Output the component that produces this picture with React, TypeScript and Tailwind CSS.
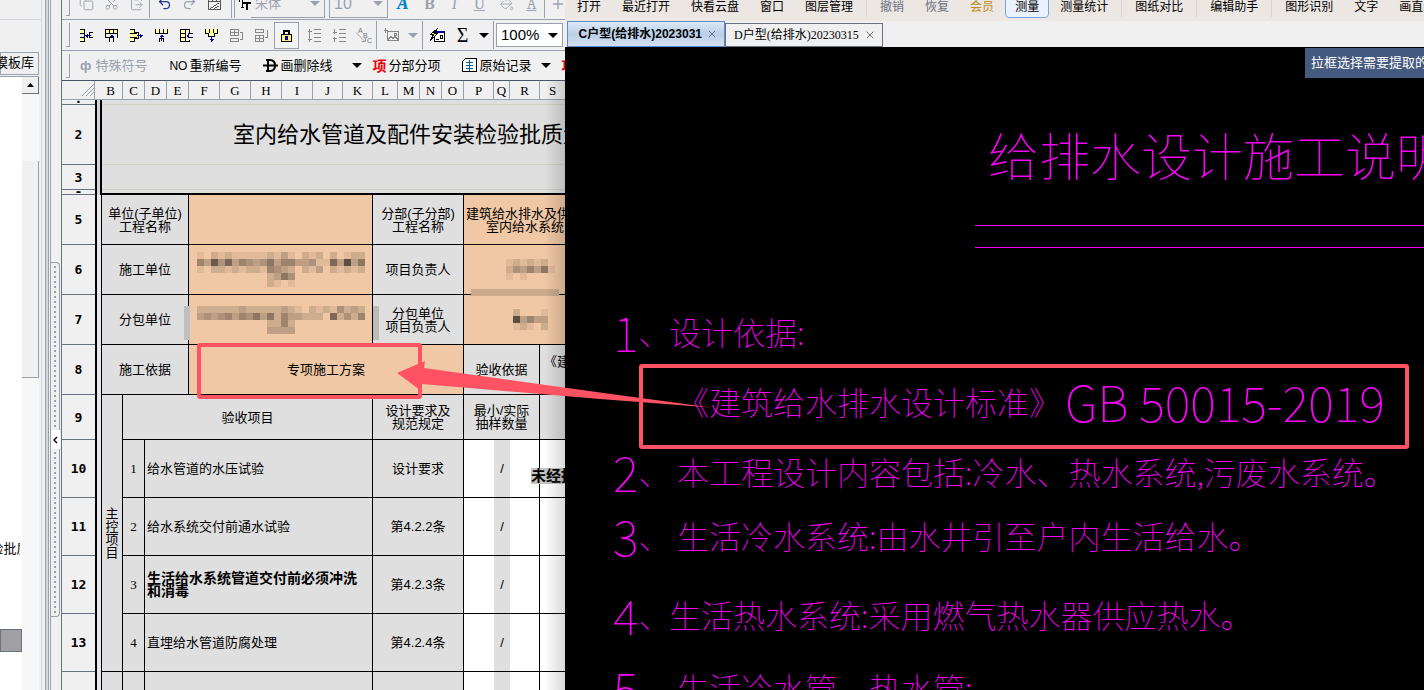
import React from 'react';
import { Copy, Scissors, ClipboardPaste, Undo2, Redo2, PaintBucket, Plus, X } from 'lucide-react';

const columns: { name: string; width: number }[] = [
  { name: 'B', width: 21 },
  { name: 'C', width: 22 },
  { name: 'D', width: 22 },
  { name: 'E', width: 22 },
  { name: 'F', width: 31 },
  { name: 'G', width: 31 },
  { name: 'H', width: 31 },
  { name: 'I', width: 31 },
  { name: 'J', width: 30 },
  { name: 'K', width: 30 },
  { name: 'L', width: 25 },
  { name: 'M', width: 22 },
  { name: 'N', width: 22 },
  { name: 'O', width: 22 },
  { name: 'P', width: 30 },
  { name: 'Q', width: 16 },
  { name: 'R', width: 30 },
  { name: 'S', width: 26 },
];

const checkItems = [
  { row: 10, no: 1, name: '给水管道的水压试验', rule: '设计要求' },
  { row: 11, no: 2, name: '给水系统交付前通水试验', rule: '第4.2.2条' },
  { row: 12, no: 3, name: '生活给水系统管道交付前必须冲洗和消毒', rule: '第4.2.3条', bold: true },
  { row: 13, no: 4, name: '直埋给水管道防腐处理', rule: '第4.2.4条' },
];

// Each digit is the darkness of one block
const companyMosaic = [
  '102121111121310212020122',
  '538473543463553341173936',
  '102212122154320213021212',
  '000000000023640000000000',
  '000000000021010000000000',
];
const subcontractorMosaic = [
  '222222322222321021214232',
  '343453546362533222072425',
  '000000000022520000000000',
  '000000000033330000000000',
];
const managerMosaic = ['1212120', '2435361', '1010000'];
const subManagerMosaic = ['0200010', '0935330', '0121020'];

const Mosaic: React.FC<{ rows: string[] }> = ({ rows }) => (
  <svg width={rows[0].length * 7} height={rows.length * 7} shapeRendering="crispEdges" aria-hidden="true">
    {rows.map((row, y) =>
      row.split('').map((d, x) => (
        <rect key={`${x}-${y}`} x={x * 7} y={y * 7} width="7" height="7" fill="#2b2320" opacity={Number(d) / 12} />
      ))
    )}
  </svg>
);

const Caret: React.FC<{ className?: string }> = ({ className = 'fill-black' }) => (
  <svg width="10" height="5" viewBox="0 0 10 5" className={`shrink-0 ${className}`} aria-hidden="true">
    <path d="M0 0h10L5 5z" />
  </svg>
);

const Grip = () => <div className="mr-1 h-6 w-1 shrink-0 border-b border-r border-gray-400" />;
const Divider = () => <div className="h-7 w-px shrink-0 bg-gray-400" />;

const ToolButton: React.FC<{ label: string; className?: string; children: React.ReactNode }> = ({
  label,
  className = '',
  children,
}) => (
  <button aria-label={label} className={`flex h-6 w-[25px] shrink-0 items-center justify-center ${className}`}>
    {children}
  </button>
);

const Glyph: React.FC<{ children: React.ReactNode; className?: string }> = ({ children, className = '' }) => (
  <svg
    width="15"
    height="15"
    viewBox="0 0 15 15"
    fill="none"
    stroke="black"
    shapeRendering="crispEdges"
    className={className}
    aria-hidden="true"
  >
    {children}
  </svg>
);

const ComboBox: React.FC<{ label: string; value: string; className: string; caret?: string }> = ({
  label,
  value,
  className,
  caret,
}) => (
  <div className={`relative flex shrink-0 items-center border border-gray-400 ${className}`}>
    <select aria-label={label} className="h-full w-full appearance-none bg-transparent px-1 outline-none">
      <option>{value}</option>
    </select>
    <span className="pointer-events-none absolute right-1">
      <Caret className={caret} />
    </span>
  </div>
);

const TemplatePanel = () => (
  <aside className="flex w-[62px] shrink-0 bg-[#f0f0f0]">
    <div className="flex w-[42px] flex-col overflow-hidden border-r border-gray-300">
      <div className="h-5 shrink-0 border-b border-gray-300" />
      <button className="mt-8 flex h-[23px] w-[39px] shrink-0 justify-end border border-gray-400 pr-1 text-[13px] leading-5">
        <span className="whitespace-nowrap">模板库</span>
      </button>
      <div className="mt-px flex w-[39px] flex-1 border-t border-gray-400">
        <div className="w-[22px] bg-white">
          <div className="mt-[464px] flex h-4 w-5 justify-center overflow-hidden text-[13px] leading-4">
            <span className="whitespace-nowrap">检批质</span>
          </div>
          <div className="mt-[72px] h-[23px] border border-gray-500 bg-[#a09fa4]" />
        </div>
        <div className="w-[17px] bg-[#f7f7f7]">
          <button
            aria-label="向上"
            className="flex h-[17px] w-full items-center justify-center border-b border-r border-gray-500 bg-[#f0f0f0]"
          >
            <svg width="7" height="4" aria-hidden="true">
              <path d="M0 4h7L3.5 0z" />
            </svg>
          </button>
          <div className="mt-[67px] h-[217px] border-b border-r border-gray-400 bg-[#f0f0f0]" />
        </div>
      </div>
    </div>
    <div className="flex flex-1 justify-between pl-[3px]">
      <div className="w-1 border-x border-gray-400 bg-gray-300" />
      <div className="flex w-[10px] flex-col border-l border-gray-400 pt-[262px]">
        <SplitterDots className="h-[168px] rounded-tr border-t" />
        <button aria-label="折叠" className="flex h-[19px] w-[9px] items-center justify-center bg-white">
          <svg width="5" height="8" fill="none" stroke="black" strokeWidth="1.5" aria-hidden="true">
            <path d="M4 1L1 4l3 3" />
          </svg>
        </button>
        <SplitterDots className="h-[168px] rounded-br border-b" />
      </div>
      <div className="w-px bg-gray-500" />
    </div>
  </aside>
);

const SplitterDots: React.FC<{ className: string }> = ({ className }) => (
  <div
    className={`flex w-[9px] flex-col items-center justify-evenly overflow-hidden border-r border-gray-400 ${className}`}
  >
    {Array.from({ length: 33 }, (_, i) => (
      <i key={i} className="h-0.5 w-0.5 shrink-0 bg-gray-400" />
    ))}
  </div>
);

const Toolbars = () => (
  <div className="h-[81px] shrink-0 overflow-hidden border-b border-gray-600">
    <div className="-mt-3 flex h-8 items-center border-b border-gray-400 pl-1 text-gray-400">
      <Grip />
      <ToolButton label="复制"><Copy size={15} strokeWidth={1.5} /></ToolButton>
      <ToolButton label="剪切"><Scissors size={15} strokeWidth={1.5} className="-rotate-90" /></ToolButton>
      <ToolButton label="粘贴"><ClipboardPaste size={15} strokeWidth={1.5} /></ToolButton>
      <Divider />
      <ToolButton label="撤消" className="ml-0.5"><Undo2 size={15} className="text-blue-900" /></ToolButton>
      <ToolButton label="重做"><Redo2 size={15} /></ToolButton>
      <ToolButton label="清除">
        <Glyph>
          <path stroke="#555" d="M1.5 1.5h12v12h-12zM1.5 5.5h12M5.5 1.5v4M9.5 1.5v4M3.5 12.5l9-6M7.5 12.5l5-3" />
        </Glyph>
      </ToolButton>
      <div className="ml-1"><Divider /></div>
      <div className="ml-0.5 flex h-7 shrink-0 items-center border-l border-gray-400 pl-1">
        <svg width="12" height="12" stroke="black" fill="none" shapeRendering="crispEdges" aria-hidden="true">
          <path d="M0 1.500h8M0.500 1v3M3.500 1v8M2 9.500h3" />
          <path strokeWidth="2" d="M4 5h8M8 5v7" />
        </svg>
        <ComboBox label="字体" value="宋体" className="h-7 w-[74px] border-l-0 text-[13px]" caret="fill-gray-400" />
      </div>
      <ComboBox label="字号" value="10" className="ml-1 h-7 w-[59px] text-base" caret="fill-gray-400" />
      <ToolButton label="文字效果" className="ml-0.5"><span className="font-serif text-lg font-bold italic text-sky-600">A</span></ToolButton>
      <ToolButton label="加粗" className="ml-0.5"><b className="font-serif text-base">B</b></ToolButton>
      <ToolButton label="倾斜"><i className="font-serif text-base">I</i></ToolButton>
      <ToolButton label="下划线"><u className="font-serif text-base">U</u></ToolButton>
      <ToolButton label="填充颜色" className="ml-0.5"><PaintBucket size={14} strokeWidth={1.5} /></ToolButton>
      <ToolButton label="文字颜色"><u className="font-serif text-base">A</u></ToolButton>
      <Divider />
      <ToolButton label="边框"><Plus size={16} /></ToolButton>
    </div>

    <div className="flex h-[31px] items-center border-b border-gray-400 pl-1">
      <Grip />
      <ToolButton label="插入单元格">
        <Glyph>
          <path fill="#ffffa0" d="M1 1.5h4.500v4h-4.500M1 9.500h4.500v4h-4.500" />
          <path d="M5.500 5.500v4M14 4.500h-3.500v5h3.500" />
          <path stroke="#00008b" d="M12 7.500h-6M8.500 5.500v4M7.500 6.500v2" />
        </Glyph>
      </ToolButton>
      <ToolButton label="插入行">
        <Glyph>
          <path fill="#ffffa0" d="M1.500 1.500h12v4h-12zM5.500 1.500v4M9.500 1.500v4M1.500 5.500v4h3" />
          <path d="M13.500 5.500v4M5.500 14v-4.500h4v4.500" />
          <path stroke="#00008b" d="M5.500 8.500h4M6.500 7.500h2" />
        </Glyph>
      </ToolButton>
      <ToolButton label="右移单元格">
        <Glyph>
          <path fill="#ffffa0" d="M1 1.500h4.500v3h4v6h-4v3h-4.500M1 5.500h7M1 9.500h7" />
          <path stroke="#00008b" d="M8 7.500h6M11.500 5.500v4M12.500 6.500v2" />
        </Glyph>
      </ToolButton>
      <ToolButton label="删除行">
        <Glyph>
          <path fill="#ffffa0" d="M1.500 1v4.500h4v-4.500M9.500 1v4.500h4v-4.500" />
          <path d="M5.500 5.500h4M5.500 14v-4h4v4" />
          <path stroke="#00008b" d="M7.500 13v-6M5.500 8.500h4M6.500 7.500h2" />
        </Glyph>
      </ToolButton>
      <ToolButton label="插入列">
        <Glyph>
          <path fill="#ffffa0" d="M1.500 1.500h5v12h-5zM1.500 5.500h5M1.500 9.500h5M6.500 1.500h4v3M6.500 13.500h4v-2" />
          <path d="M14 5.500h-4.500v4h4.500" />
          <path stroke="#00008b" d="M8.500 6.500v2M9.500 5.500v4" />
        </Glyph>
      </ToolButton>
      <ToolButton label="下移单元格">
        <Glyph>
          <path fill="#ffffa0" d="M1.500 1v4.500h3v3h6v-3h3v-4.500M5.500 1v4M9.500 1v4" />
          <path stroke="#00008b" d="M7.500 8v6M5.500 11.500h4M6.500 12.500h2" />
        </Glyph>
      </ToolButton>
      <ToolButton label="删除单元格">
        <Glyph>
          <path stroke="#888" d="M1.500 1.500h8v6h-8zM1.500 4.500h8M5.500 1.500v6M1.500 10.500h8v3h-8zM11 4.500h2.500v7h-2.500" />
        </Glyph>
      </ToolButton>
      <ToolButton label="合并单元格">
        <Glyph>
          <path stroke="#888" d="M1.500 1.500h8v3h-8zM1.500 7.500h8v6h-8zM1.500 10.500h8M5.500 7.500v6M13.500 2v7.500h-3" />
        </Glyph>
      </ToolButton>
      <ToolButton label="锁定" className="h-[27px] border border-gray-400 bg-gray-100">
        <Glyph>
          <path strokeWidth="2" d="M5 6v-3h5v3" />
          <path fill="#ffee80" d="M2.500 6.500h10v7h-10z" />
          <path fill="#00008b" stroke="none" d="M6 8h3v4h-3z" />
        </Glyph>
      </ToolButton>
      <ToolButton label="增大行距" className="ml-0.5">
        <Glyph><path stroke="#888" d="M3.500 1v13M1.500 3.500h4M1.500 11.500h4M7.500 1.500h7M7.500 5.500h7M7.500 9.500h7M7.500 13.500h7" /></Glyph>
      </ToolButton>
      <ToolButton label="减小行距">
        <Glyph><path stroke="#888" d="M3.500 1v5M1.500 4.500h4M3.500 14v-5M1.500 10.500h4M7.500 1.500h7M7.500 5.500h7M7.500 9.500h7M7.500 13.500h7" /></Glyph>
      </ToolButton>
      <ToolButton label="文字方向">
        <svg width="17" height="17" className="fill-gray-500 stroke-gray-400" aria-hidden="true">
          <text x="3" y="6" fontSize="7" strokeWidth="0">A</text>
          <text x="8" y="11" fontSize="7" strokeWidth="0">B</text>
          <text x="12" y="16" fontSize="7" strokeWidth="0">C</text>
          <path fill="none" d="M1 5.500l9 9M6.500 14.500h4v-4" />
        </svg>
      </ToolButton>
      <Divider />
      <ToolButton label="插入图片" className="ml-0.5">
        <Glyph><path stroke="#888" d="M1.500 0v5M0 2.500h4M3.500 3.500h11v9h-11zM4 11.500l3-3 2 2 2-2 3 3M10.500 5.500h2v2h-2z" /></Glyph>
      </ToolButton>
      <Caret className="mr-1 ml-1 fill-gray-400" />
      <Divider />
      <ToolButton label="函数" className="ml-0.5">
        <Glyph>
          <path fill="white" d="M4.500 3.500h10v10h-10z" />
          <path stroke="#00008b" strokeWidth="2" d="M4 4h11" />
          <path d="M10.500 7.500h2v3h-2zM6 11.500h3" />
          <path fill="#fff25c" d="M7.500 0.500l-7 6h3l-3 6 7-7h-3z" />
        </Glyph>
      </ToolButton>
      <ToolButton label="求和"><span className="font-['Liberation_Serif',serif] text-xl">Σ</span></ToolButton>
      <Caret className="mr-1 ml-1 fill-black" />
      <Divider />
      <ComboBox label="缩放比例" value="100%" className="ml-0.5 h-6 w-[67px] bg-white text-[15px]" />
    </div>

    <div className="flex h-[29px] items-center whitespace-nowrap pl-1 text-[13px]">
      <Grip />
      <button disabled className="ml-1.5 flex shrink-0 items-center gap-1 text-gray-400">
        <span className="font-bold">ф</span>特殊符号
      </button>
      <button className="ml-[22px] flex shrink-0 items-center gap-0.5">
        <span className="text-xs">NO</span>重新编号
      </button>
      <button className="ml-[22px] flex shrink-0 items-center gap-0.5">
        <svg width="15" height="13" fill="none" stroke="black" strokeWidth="2" aria-hidden="true">
          <path d="M5 1v11M3 1h4q5 0 5 5.500t-5 5.500H3M0 6.500h15" />
        </svg>
        画删除线
      </button>
      <button aria-label="画删除线选项" className="ml-5 shrink-0"><Caret /></button>
      <button className="ml-2.5 flex shrink-0 items-center gap-0.5">
        <b className="text-sm text-red-600">项</b>分部分项
      </button>
      <button className="ml-[22px] flex shrink-0 items-center gap-0.5">
        <Glyph>
          <path fill="white" d="M3.500 0.500h11v13h-14v-10z" />
          <path stroke="#075ba0" d="M4 4.500h7M4 7.500h7M4 10.500h7M7.500 2v11" />
        </Glyph>
        原始记录
      </button>
      <button aria-label="原始记录选项" className="ml-2.5 shrink-0"><Caret /></button>
      <b className="ml-2.5 text-sm text-red-600">项</b>
    </div>
  </div>
);

const label = 'border-b border-r border-black bg-[#dfdfdf]';
const input = 'border-b border-r border-black bg-[#f0c8a5]';
const blank = 'border-b border-r border-black bg-white';

// Row number on the left plus the frozen pane bar
const RowHead: React.FC<{ n: string | number; frozen?: boolean }> = ({ n, frozen }) => (
  <>
    <th className="overflow-hidden border-b border-gray-500 bg-[#f0f0f0] font-['DejaVu_Sans_Mono',monospace] font-bold">
      {n}
    </th>
    <td className={frozen ? 'border-x-2 border-black bg-gray-300' : 'border-l-2 border-r border-black bg-gray-200'} />
  </>
);

const Sheet = () => (
  <div className="relative flex-1 overflow-hidden bg-[#f0f0f0]">
    <table className="w-[504px] table-fixed border-separate border-spacing-0 text-center text-[13px] leading-[13px]">
      <colgroup>
        <col style={{ width: 33 }} />
        <col style={{ width: 7 }} />
        {columns.map(c => (
          <col key={c.name} style={{ width: c.width }} />
        ))}
      </colgroup>
      <thead>
        <tr className="h-[19px] font-['Liberation_Serif',serif]">
          <th aria-label="全选" className="border-b border-r border-gray-400">
            <svg width="12" height="12" className="ml-auto stroke-gray-400" aria-hidden="true">
              <path d="M0 12L12 0M4 12l8-8M8 12l4-4" />
            </svg>
          </th>
          {columns.map((c, i) => (
            <th
              key={c.name}
              colSpan={i === 0 ? 2 : 1}
              className={`border-b border-r border-gray-400 font-normal ${i === 0 ? 'pl-1' : ''}`}
            >
              {c.name}
            </th>
          ))}
        </tr>
      </thead>
      <tbody>
        <tr className="h-[5px] leading-[4px]">
          <RowHead n="·" frozen />
          <td colSpan={18} className="border-b border-[#d0cfc5] bg-[#dfdfdf]" />
        </tr>
        <tr className="h-[60px]">
          <RowHead n={2} frozen />
          <td colSpan={18} className="border-b border-[#d0cfc5] bg-[#dfdfdf] pl-[131px] text-left text-[22px] leading-6">
            <div className="overflow-hidden whitespace-nowrap">室内给水管道及配件安装检验批质量</div>
          </td>
        </tr>
        <tr className="h-[25px]">
          <RowHead n={3} frozen />
          <td colSpan={18} className="border-b border-[#d0cfc5] bg-[#dfdfdf]" />
        </tr>
        <tr className="h-[5px] leading-[4px]">
          <RowHead n="-" frozen />
          <td colSpan={18} className="border-b-2 border-black bg-[#dfdfdf]" />
        </tr>
        <tr className="h-[50px]">
          <RowHead n={5} />
          <td colSpan={4} className={label}>单位(子单位)<br />工程名称</td>
          <td colSpan={6} className={input} />
          <td colSpan={4} className={label}>分部(子分部)<br />工程名称</td>
          <td colSpan={4} className={`${input} overflow-hidden whitespace-nowrap pl-0.5 text-left`}>
            <div>建筑给水排水及供</div>
            <div className="pl-5">室内给水系统</div>
          </td>
        </tr>
        <tr className="h-[50px]">
          <RowHead n={6} />
          <td colSpan={4} className={label}>施工单位</td>
          <td colSpan={6} className={input}><div className="flex justify-center"><Mosaic rows={companyMosaic} /></div></td>
          <td colSpan={4} className={label}>项目负责人</td>
          <td colSpan={4} className={`${input} pl-[42px]`}><Mosaic rows={managerMosaic} /></td>
        </tr>
        <tr className="h-[50px]">
          <RowHead n={7} />
          <td colSpan={4} className={label}>分包单位</td>
          <td colSpan={6} className={input}><div className="flex justify-center"><Mosaic rows={subcontractorMosaic} /></div></td>
          <td colSpan={4} className={label}>分包单位<br />项目负责人</td>
          <td colSpan={4} className={`${input} pl-[42px]`}><Mosaic rows={subManagerMosaic} /></td>
        </tr>
        <tr className="h-[50px]">
          <RowHead n={8} />
          <td colSpan={4} className={label}>施工依据</td>
          <td colSpan={10} className={input}>专项施工方案</td>
          <td colSpan={3} className={label}>验收依据</td>
          <td className={`${label} overflow-hidden whitespace-nowrap pb-4 pl-1 text-left`}>《建</td>
        </tr>
        <tr className="h-[45px]">
          <RowHead n={9} />
          <td rowSpan={5} className={label}><span className="mx-auto block w-[13px]">主控项目</span></td>
          <td colSpan={9} className={label}>验收项目</td>
          <td colSpan={4} className={label}>设计要求及<br />规范规定</td>
          <td colSpan={3} className={label}>最小/实际<br />抽样数量</td>
          <td className={label} />
        </tr>
        {checkItems.map(item => (
          <tr key={item.row} className="h-[58px]">
            <RowHead n={item.row} />
            <td className={`${label} font-['Liberation_Serif',serif]`}>{item.no}</td>
            <td
              colSpan={8}
              className={`${label} pr-3 pl-0.5 text-left ${item.bold ? 'text-[14px] leading-[13px] font-bold' : ''}`}
            >
              {item.name}
            </td>
            <td colSpan={4} className={label}>{item.rule}</td>
            <td className="border-b border-black bg-white" />
            <td className="border-b border-black bg-[#dfdfdf]">/</td>
            <td className={blank} />
            <td className={blank} />
          </tr>
        ))}
        <tr className="h-[58px]">
          <RowHead n="" />
          <td className={label} />
          <td className={label} />
          <td colSpan={8} className={label} />
          <td colSpan={4} className={label} />
          <td className="bg-white" />
          <td className="bg-[#dfdfdf]" />
          <td className={blank} />
          <td className={blank} />
        </tr>
      </tbody>
    </table>
    <div className="absolute top-[387px] left-[469px] whitespace-nowrap bg-[#c4c4c4] text-[15px] leading-4 font-bold">未经批</div>
    <div className="absolute top-[225px] left-[122px] h-[34px] w-1.5 bg-[#bfbfbf]" />
    <div className="absolute top-[225px] left-[311px] h-[34px] w-1.5 bg-[#bfbab3]" />
    <div className="absolute top-[208px] left-[409px] h-[7px] w-[88px] bg-[#caaa8b]" />
    <div className="absolute inset-y-0 right-0 w-5 bg-linear-to-r from-transparent to-black/15" />
  </div>
);

const menuItems = [
  '打开', '最近打开', '快看云盘', '窗口', '图层管理', '|', '撤销', '恢复', '会员', '测量', '测量统计', '|',
  '图纸对比', '|', '编辑助手', '|', '图形识别', '文字', '画直线',
];

const menuStyle: Record<string, string> = {
  撤销: 'px-2.5 text-gray-500',
  恢复: 'px-2.5 text-gray-500',
  会员: 'px-2.5 text-[#c08a20]',
  测量: 'rounded border border-[#7da2e8] bg-[#eaf2fd] px-[9px]',
};

const notes = [
  { no: '1', text: '设计依据:', height: 'h-[70px]', noWidth: 'w-14' },
  { no: '', text: '《建筑给水排水设计标准》', code: 'GB 50015-2019', height: 'h-[70px]', noWidth: 'w-16' },
  { no: '2', text: '本工程设计内容包括:冷水、热水系统,污废水系统。', height: 'h-[70px]', noWidth: 'w-16' },
  { no: '3', text: '生活冷水系统:由水井引至户内生活给水。', height: 'h-[58px]', noWidth: 'w-16' },
  { no: '4', text: '生活热水系统:采用燃气热水器供应热水。', height: 'h-[100px]', noWidth: 'w-14' },
  { no: '5', text: '生活冷水管、热水管:', height: 'h-[46px]', noWidth: 'w-16' },
];

const CadViewer = () => (
  <main className="flex min-w-0 flex-[859] flex-col overflow-hidden bg-black">
    <nav className="-mt-[7px] flex h-7 shrink-0 items-center gap-px overflow-hidden bg-[#ece7e3] pl-0.5 text-xs">
      {menuItems.map((item, i) =>
        item === '|' ? (
          <div key={i} className="mx-0.5 h-5 w-px shrink-0 bg-gray-300" />
        ) : (
          <button key={item} className={`h-[22px] shrink-0 whitespace-nowrap ${menuStyle[item] ?? 'px-2.5'}`}>
            {item}
          </button>
        )
      )}
    </nav>
    <div className="flex h-[26px] shrink-0 items-end bg-[#f0f0f0] pl-0.5 text-xs whitespace-nowrap">
      <div className="flex h-[26px] w-[158px] items-center justify-end gap-1 overflow-hidden border border-[#5b8ac5] bg-linear-to-b from-[#dce9f7] via-[#b9cfe8] to-[#d3e1f1] pr-1.5">
        <button className="font-bold">C户型(给排水)2023031</button>
        <button aria-label="关闭"><X size={12} className="text-gray-500" /></button>
      </div>
      <div className="flex h-6 w-[158px] items-center justify-between border border-gray-500 pr-1.5 pl-2">
        <button className="font-['Liberation_Serif','Noto_Sans_CJK_SC',serif]">D户型(给排水)20230315</button>
        <button aria-label="关闭"><X size={12} className="text-gray-500" /></button>
      </div>
    </div>
    <div className="mt-px flex shrink-0 justify-end">
      <div className="h-[30px] w-[119px] overflow-hidden bg-[#455a7f] pl-1.5 text-[13px] leading-[29px] whitespace-nowrap text-white">
        拉框选择需要提取的
      </div>
    </div>
    <div className="font-['Noto_Sans_CJK_SC',sans-serif] font-thin whitespace-nowrap text-[#ff00ff]">
      <h1 className="mt-8 ml-[423px] h-[115px] text-[51px] leading-[88px] font-thin">给排水设计施工说明</h1>
      <div className="ml-[410px] h-[23px] border-y border-[#ff00ff]" />
      <div className="mt-12 pl-12">
        {notes.map(note => (
          <div key={note.text} className={`flex items-center text-[32px] ${note.height}`}>
            <span className={`flex shrink-0 items-center ${note.noWidth}`}>
              {note.no && <><span className="text-[49px]">{note.no}</span>、</>}
            </span>
            <span>{note.text}</span>
            {note.code && <span className="ml-1 text-[49px]">{note.code}</span>}
          </div>
        ))}
      </div>
    </div>
  </main>
);

const Annotations = () => (
  <svg className="pointer-events-none absolute top-0 left-0 h-[690px] w-[1424px]" aria-hidden="true">
    <g fill="none" stroke="#ff5364" strokeWidth="4">
      <rect x="199" y="345" width="221" height="52" rx="1" />
      <rect x="641" y="366" width="766" height="81" rx="1" />
    </g>
    <path fill="#ff5364" d="M397 373L425 361L424 368L600 392.500L711 407.500L600 399L422 384L420 390Z" />
  </svg>
);

export default function App() {
  return (
    <div className="relative flex h-screen overflow-hidden bg-[#f0f0f0] font-['Liberation_Sans','Noto_Sans_CJK_SC',sans-serif] text-black">
      <TemplatePanel />
      <section className="flex min-w-0 flex-[503] flex-col overflow-hidden">
        <Toolbars />
        <Sheet />
      </section>
      <CadViewer />
      <Annotations />
    </div>
  );
}
